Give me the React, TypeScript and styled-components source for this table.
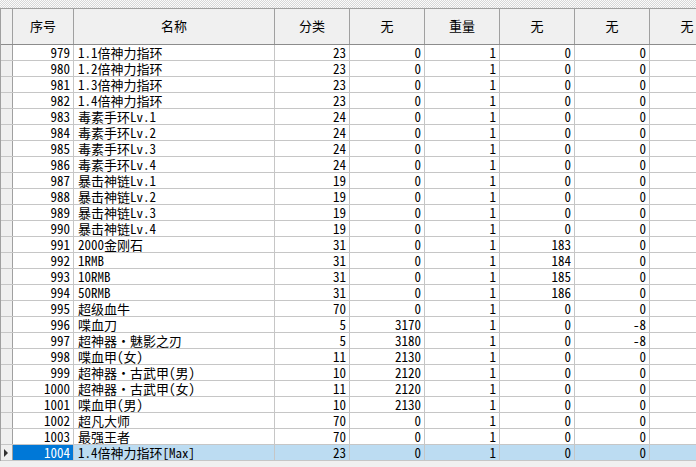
import React from "react";
import styled, { createGlobalStyle } from "styled-components";

const Global = createGlobalStyle`
  html, body { margin: 0; padding: 0; background: #f0f0f0; overflow: hidden; }
  body { font-family: "Noto Sans Mono CJK SC", "Noto Sans CJK SC", "Noto Sans", monospace; font-size: 13px; color: #000; }
`;

type Row = [number, string, number, number, number, number, number];

const rows: Row[] = [
  [979, "1.1倍神力指环", 23, 0, 1, 0, 0],
  [980, "1.2倍神力指环", 23, 0, 1, 0, 0],
  [981, "1.3倍神力指环", 23, 0, 1, 0, 0],
  [982, "1.4倍神力指环", 23, 0, 1, 0, 0],
  [983, "毒素手环Lv.1", 24, 0, 1, 0, 0],
  [984, "毒素手环Lv.2", 24, 0, 1, 0, 0],
  [985, "毒素手环Lv.3", 24, 0, 1, 0, 0],
  [986, "毒素手环Lv.4", 24, 0, 1, 0, 0],
  [987, "暴击神链Lv.1", 19, 0, 1, 0, 0],
  [988, "暴击神链Lv.2", 19, 0, 1, 0, 0],
  [989, "暴击神链Lv.3", 19, 0, 1, 0, 0],
  [990, "暴击神链Lv.4", 19, 0, 1, 0, 0],
  [991, "2000金刚石", 31, 0, 1, 183, 0],
  [992, "1RMB", 31, 0, 1, 184, 0],
  [993, "10RMB", 31, 0, 1, 185, 0],
  [994, "50RMB", 31, 0, 1, 186, 0],
  [995, "超级血牛", 70, 0, 1, 0, 0],
  [996, "喋血刀", 5, 3170, 1, 0, -8],
  [997, "超神器・魅影之刃", 5, 3180, 1, 0, -8],
  [998, "喋血甲(女)", 11, 2130, 1, 0, 0],
  [999, "超神器・古武甲(男)", 10, 2120, 1, 0, 0],
  [1000, "超神器・古武甲(女)", 11, 2120, 1, 0, 0],
  [1001, "喋血甲(男)", 10, 2130, 1, 0, 0],
  [1002, "超凡大师", 70, 0, 1, 0, 0],
  [1003, "最强王者", 70, 0, 1, 0, 0],
  [1004, "1.4倍神力指环[Max]", 23, 0, 1, 0, 0],
];

const headers = ["序号", "名称", "分类", "无", "重量", "无", "无", "无"];
const widths = [61, 201, 75, 75, 75, 75, 75, 75];

const Page = styled.div`
  width: 696px;
  height: 467px;
  overflow: hidden;
  background: #f0f0f0;
  display: flex;
  flex-direction: column;
`;

const Band = styled.div`
  height: 8px;
  flex: none;
  background-color: #fbfbfb;
  background-image: repeating-conic-gradient(#d8d8d8 0% 25%, #fbfbfb 0% 50%);
  background-size: 2px 2px;
`;

const Grid = styled.div`
  width: 820px;
  display: flex;
  flex-direction: column;
  border-left: 1px solid #a0a0a0;
`;

const HeaderRow = styled.div`
  display: flex;
  height: 37px;
  box-sizing: border-box;
  border-top: 1px solid #a0a0a0;
  border-bottom: 1px solid #8c8c8c;
  background: #f0f0f0;
`;

const HeaderCell = styled.div<{ $w: number }>`
  width: ${(p) => p.$w}px;
  flex: none;
  box-sizing: border-box;
  border-right: 1px solid #a0a0a0;
  display: flex;
  align-items: center;
  justify-content: center;
  padding-bottom: 2px;
`;

const Corner = styled.div`
  width: 12px;
  flex: none;
  box-sizing: border-box;
  border-right: 1px solid #a0a0a0;
`;

const BodyRow = styled.div`
  display: flex;
  height: 16px;
  box-sizing: border-box;
  border-bottom: 1px solid #c6c6c6;
  background: #fff;
`;

const RowHead = styled.div`
  width: 12px;
  flex: none;
  box-sizing: border-box;
  border-right: 1px solid #a0a0a0;
  background: #f0f0f0;
  display: flex;
  align-items: center;
  justify-content: center;
`;

const Cell = styled.div<{ $w: number; $align: "left" | "right"; $sel?: "current" | "row" }>`
  width: ${(p) => p.$w}px;
  flex: none;
  box-sizing: border-box;
  border-right: 1px solid #c6c6c6;
  padding: 0 ${(p) => (p.$align === "right" ? "3px" : "0")} 0 ${(p) => (p.$align === "left" ? "4px" : "0")};
  text-align: ${(p) => p.$align};
  line-height: 15px;
  white-space: nowrap;
  background: ${(p) => (p.$sel === "current" ? "#0078d7" : p.$sel === "row" ? "#bcdcf2" : "#fff")};
  color: ${(p) => (p.$sel === "current" ? "#fff" : "#000")};
`;

const Arrow = () => (
  <svg width="5" height="8" viewBox="0 0 5 8">
    <path d="M0 0 L4 4 L0 8 Z" fill="#333" />
  </svg>
);

export default function App() {
  return (
    <Page>
      <Global />
      <Band />
      <Grid>
        <HeaderRow>
          <Corner />
          {headers.map((h, i) => (
            <HeaderCell key={i} $w={widths[i]}>
              {h}
            </HeaderCell>
          ))}
        </HeaderRow>
        {rows.map((r, idx) => {
          const selected = idx === rows.length - 1;
          const vals: (string | number)[] = [...r, ""];
          return (
            <BodyRow key={r[0]}>
              <RowHead>{selected && <Arrow />}</RowHead>
              {vals.map((v, i) => (
                <Cell
                  key={i}
                  $w={widths[i]}
                  $align={i === 1 ? "left" : "right"}
                  $sel={selected ? (i === 0 ? "current" : "row") : undefined}
                >
                  {v}
                </Cell>
              ))}
            </BodyRow>
          );
        })}
      </Grid>
    </Page>
  );
}
